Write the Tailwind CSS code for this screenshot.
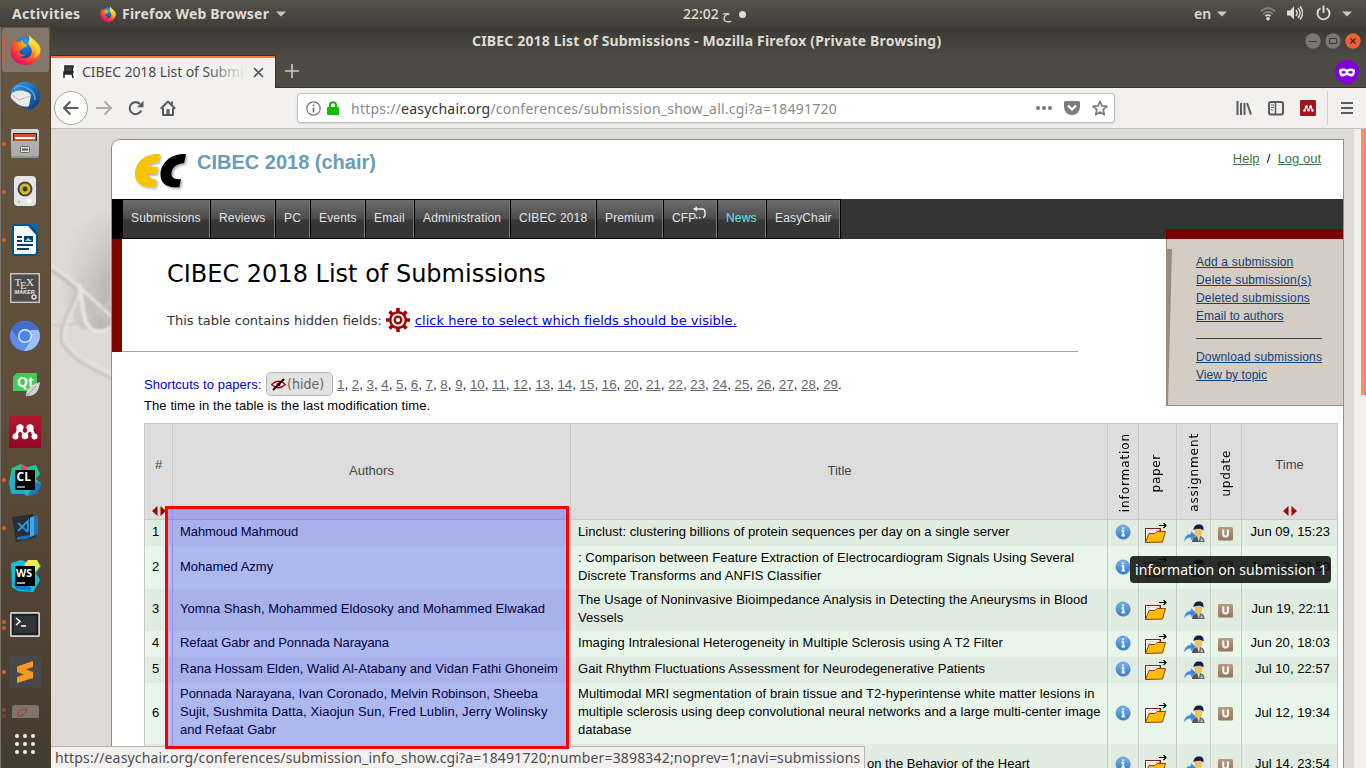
<!DOCTYPE html>
<html lang="en">
<head>
<meta charset="utf-8">
<title>CIBEC 2018 List of Submissions</title>
<script src="https://cdn.jsdelivr.net/npm/@tailwindcss/browser@4"></script>
</head>
<body class="relative w-[1366px] h-[768px] overflow-hidden bg-[#dedbd7] font-['Liberation_Sans',sans-serif] text-[13px] text-black">

<svg class="absolute w-0 h-0">
  <defs>
    <radialGradient id="fx" cx=".75" cy=".15" r=".95"><stop offset="0" stop-color="#fff04a"/><stop offset=".35" stop-color="#ffb61e"/><stop offset=".6" stop-color="#ff6a1a"/><stop offset=".85" stop-color="#f5204c"/><stop offset="1" stop-color="#d8106a"/></radialGradient>
    <radialGradient id="fxb" cx=".5" cy=".2" r=".8"><stop offset="0" stop-color="#19a5f5"/><stop offset="1" stop-color="#1b2f96"/></radialGradient>
    <linearGradient id="inf" x1="0" y1="0" x2="0" y2="1"><stop offset="0" stop-color="#7ab4ee"/><stop offset="1" stop-color="#2f7bd0"/></linearGradient>
    <linearGradient id="ub" x1="0" y1="0" x2="0" y2="1"><stop offset="0" stop-color="#b59b80"/><stop offset="1" stop-color="#94785c"/></linearGradient>
    <linearGradient id="silver" x1="0" y1="0" x2="0" y2="1"><stop offset="0" stop-color="#d8d8d8"/><stop offset="1" stop-color="#8f8f8f"/></linearGradient>
    <linearGradient id="tb" x1="0" y1="0" x2="1" y2="1"><stop offset="0" stop-color="#3ba0e6"/><stop offset="1" stop-color="#08357c"/></linearGradient>
  </defs>
  <symbol id="firefox" viewBox="0 0 32 32">
    <circle cx="16" cy="15" r="12" fill="url(#fxb)"/>
    <path d="M20 1c1 3 4 4 7 8 3 3 4.500 6 4.500 9a15.500 14 0 0 1-31 0C.5 12 2.500 8 4.500 4.500c0 2 .5 3 1.500 3.500 2-.5 4-.5 5 0l2-2c0 2 0 3.500 3 4.500l1.500 1c-1 2-3 2-4.500 3 0 2-3 2-3.500 4 .5 2.500 4 3.500 7 2.500-2 3-5 2.500-6.500 2.500 5 3 12.500 1 12.500-5.500 0-4-2-6-4-8 1.500-3 1.500-5 1.500-9z" fill="url(#fx)"/>
    <path d="M20 1c0 5 1 8 4.500 11 3 4 3 9-.5 13 4.500-1 7.500-5 7.500-9 0-8-8-9-11.500-15z" fill="#ffe03a" opacity=".7"/>
  </symbol>
  <symbol id="info" viewBox="0 0 16 16">
    <circle cx="8.600" cy="8.800" r="7" fill="#000" opacity=".25"/><circle cx="8" cy="8" r="7" fill="url(#inf)" stroke="#3b7fca" stroke-width=".6"/>
    <path d="M8 3.400v1.800M6.600 7H8.300v4.300M6.500 11.500h3.400" stroke="#fff" stroke-width="1.800" fill="none"/>
  </symbol>
  <symbol id="folder" viewBox="0 0 24 21">
    <path d="M1.500 19.500v-14h4l1.500 0h9v5" fill="#fff" stroke="#8a1a10"/>
    <path d="M1.500 5.500h15M16.500 5v4" stroke="#8a1a10" fill="none"/>
    <path d="M3.500 7.500h12M3.500 9.500h4" stroke="#b9b9b9" stroke-dasharray="1 1"/>
    <path d="M1.500 19.500l3.500-9h6l2-2h8.500l-3 10.500z" fill="#fabf05" stroke="#9a3a10"/>
    <path d="M15 2.500h7M19.500 0l2.500 2.500-2.500 2.500" stroke="#000" stroke-width="1.200" fill="none"/>
  </symbol>
  <symbol id="person" viewBox="0 0 21 18">
    <path d="M8 18c0-4 3-6 6.500-6s6 2 6 6z" fill="#4d5560"/><path d="M17 13l3 4-4 .5z" fill="#a9b0b8"/>
    <path d="M13 12h3l-1 6z" fill="#f0d9a0"/>
    <ellipse cx="14.500" cy="8" rx="3.800" ry="5" fill="#f0c35d"/>
    <path d="M9.500 6c0-4 3-6 6-5.500 3 0 4.500 2.500 4 6-2-2-6-2.500-10-.5z" fill="#161d52"/>
    <path d="M.5 17c0-4 2.500-7 6.500-7V7.500l5 4.200-5 4.300v-2.500c-3-.5-5 1-6.500 3.500z" fill="#3e86d8" stroke="#7aaee8" stroke-width=".5"/>
  </symbol>
  <symbol id="ubadge" viewBox="0 0 15 14">
    <rect width="15" height="13.500" rx="1.500" fill="url(#ub)"/>
    <path d="M5.300 3v4.200c0 3 4.600 3 4.600 0V3M4.300 3.500h2M8.900 3.500h2" stroke="#fff" stroke-width="2" fill="none"/>
  </symbol>
  <symbol id="sort" viewBox="0 0 14 10"><path d="M0 5L5.500 0v10zM14 5L8.500 0v10z" fill="#a50000"/></symbol>
  <symbol id="mendeley" viewBox="0 0 26 16">
    <path d="M3.500 12.500L7 4.500l6 5 6-5 3.500 8" stroke="#fff" stroke-width="3" fill="none"/>
    <g fill="#fff"><circle cx="8" cy="4" r="3.700"/><circle cx="18" cy="4" r="3.700"/><circle cx="3.500" cy="12.500" r="3"/><circle cx="13" cy="12" r="3.300"/><circle cx="22.500" cy="12.500" r="3"/></g>
    <circle cx="13" cy="6.500" r="2.200" fill="#a00d28"/>
  </symbol>
</svg>

<!-- desktop top bar -->
<header class="h-[27px] flex items-center bg-linear-to-b from-[#55524a] to-[#403f3a] text-[#dfdbd2] font-['Noto_Sans',sans-serif] font-bold text-[14px] whitespace-nowrap">
  <span class="w-[88px] pl-3 tracking-[0.35px]">Activities</span>
  <svg class="w-4 h-4 ml-3"><use href="#firefox"/></svg>
  <span class="ml-[6px] w-[150px] tracking-[0.2px]">Firefox Web Browser</span>
  <svg class="w-[10px] h-[6px] ml-[4px]" viewBox="0 0 10 6"><path d="M0 .5h10L5 5.500z" fill="#ccc8c0"/></svg>
  <span class="ml-[397px] w-[65px] font-medium tracking-[-0.3px]">22:02 ح <span class="inline-block size-[7px] rounded-full bg-[#dfdbd2] mb-[1px] ml-[4px]"></span></span>
  <span class="ml-[446px] w-[18px] font-semibold">en</span>
  <svg class="w-[10px] h-[6px] ml-[5px]" viewBox="0 0 10 6"><path d="M0 .5h10L5 5.500z" fill="#ccc8c0"/></svg>
  <svg class="w-4 h-[14px] ml-[33px]" viewBox="0 0 16 14" fill="none" stroke-width="1.800"><path d="M1 4.500c4-4.500 10-4.500 14 0" stroke="#85827b"/><path d="M3.300 7c3-3 6.500-3 9.400 0" stroke="#85827b"/><path d="M5.500 9.200c1.500-1.500 3.500-1.500 5 0" stroke="#dfdbd2"/><circle cx="8" cy="11.800" r="1.800" fill="#dfdbd2"/></svg>
  <svg class="w-4 h-4 ml-[11px] -mt-px" viewBox="0 0 16 16"><path d="M0 5.500h3l4-4v13l-4-4H0z" fill="#dfdbd2"/><path d="M9 5c1.500 2 1.500 4 0 6M11 3c2.500 3 2.500 7 0 10M13 1.500c3.300 4 3.300 9 0 13" stroke="#dfdbd2" stroke-width="1.400" fill="none"/></svg>
  <svg class="w-[15px] h-4 ml-[13px] -mt-px" viewBox="0 0 15 16" fill="none" stroke="#dfdbd2" stroke-width="1.900"><path d="M4.500 3.200a6 6 0 1 0 6 0M7.500 .5v7.500"/></svg>
  <svg class="w-[10px] h-[6px] ml-[11px]" viewBox="0 0 10 6"><path d="M0 .5h10L5 5.500z" fill="#ccc8c0"/></svg>
</header>

<div class="flex h-[741px]">
  <!-- dock -->
  <aside class="w-[51px] shrink-0 bg-linear-to-b from-[#66563f] via-[#5e4e3b] to-[#463b30] border-l border-[#77736b] border-r border-r-[#4c4030] flex flex-col overflow-hidden">
    <div class="h-[45px] shrink-0 flex items-center pl-px"><div class="w-[47px] h-[44px] rounded-[3px] bg-[#83766a] flex items-center">
      <div class="flex flex-col gap-[2px] w-[3px]"><i class="size-1 rounded-full bg-[#e2582d]"></i><i class="size-1 rounded-full bg-[#e2582d]"></i><i class="size-1 rounded-full bg-[#e2582d]"></i><i class="size-1 rounded-full bg-[#e2582d]"></i></div>
      <svg class="size-[31px] ml-[5px] -mt-px"><use href="#firefox"/></svg></div></div>
    <div class="h-12 shrink-0 flex items-center pl-[8px]"><svg class="size-8" viewBox="0 0 32 32"><path d="M2 12C5 1 19-1 26 5c6 5 6 14 3 19-3 5-9 7-13 5L3 19z" fill="url(#tb)"/><path d="M2 15c2-6 16-6 20 0l-2 11c-5 2-11-1-15-5-2-2-4-3-3-6z" fill="#eceae6"/><path d="M3 15l7 5 11-4" stroke="#b6b3ae" fill="none"/><path d="M5 9c3-5 10-3 13-1 5 2 8 6 8 12" stroke="#4ba7e8" stroke-width="1.500" fill="none"/></svg></div>
    <div class="h-12 shrink-0 flex items-center pl-px"><i class="size-1 rounded-full bg-[#f05a28]"></i><svg class="w-[30px] h-8 ml-[4px]" viewBox="0 0 30 32"><rect x="1" y="1" width="28" height="29" rx="2" fill="url(#silver)"/><rect x="3" y="5" width="24" height="9" fill="#33302c"/><path d="M4 6h22v8H4z" fill="#c75320"/><path d="M5 9h20v2H5z" fill="#fff"/><path d="M2 13h26v15H2z" fill="#aeaeae"/><rect x="10.500" y="18.500" width="9" height="6" rx="1" fill="#ddd" stroke="#666"/><path d="M12 21.500h6" stroke="#555" stroke-width="2"/></svg></div>
    <div class="h-12 shrink-0 flex items-center pl-px"><i class="size-1 rounded-full bg-[#f05a28]"></i><svg class="w-[30px] h-8 ml-[4px] -mt-[2px]" viewBox="0 0 30 32"><path d="M3 8c-3 5-3 11 0 16M27 8c3 5 3 11 0 16" stroke="#45597a" fill="none" stroke-width="1.500"/><rect x="4" y="1" width="22" height="30" rx="4" fill="#e4e4e2"/><circle cx="15" cy="14" r="7.500" fill="#444"/><circle cx="15" cy="14" r="5.500" fill="#d8ba28"/><circle cx="15" cy="14" r="2.500" fill="#3a3a3a"/><circle cx="19" cy="26" r="2.500" fill="#fff"/><circle cx="9" cy="27" r="1" fill="#aaa"/></svg></div>
    <div class="h-12 shrink-0 flex items-center pl-px"><i class="size-1 rounded-full bg-[#f05a28]"></i><svg class="w-[26px] h-8 ml-[6px]" viewBox="0 0 26 32"><path d="M3 0h15l8 8v21q0 3-3 3H3q-3 0-3-3V3q0-3 3-3z" fill="#02568f"/><path d="M2 2h14l8 9v17q0 2-2 2H2z" fill="#f5f7f8"/><path d="M18 0h8v8z" fill="#0a6da8"/><path d="M5 13h5M5 17h5M5 21h16M5 25h12" stroke="#02426e" stroke-width="2"/><rect x="12" y="12" width="9" height="6" fill="#02426e"/><path d="M13 17l3-3 4 3z" fill="#9fd0f0"/></svg></div>
    <div class="h-12 shrink-0 flex items-center pl-[9px]"><svg class="w-[30px] h-[30px]" viewBox="0 0 30 30"><rect x=".7" y=".7" width="28.600" height="28.600" fill="#4c4c4c" stroke="#c9c6c0" stroke-width="1.500"/><g fill="#e8e8e8" font-family="Liberation Serif"><text x="4.500" y="13" font-size="11">T</text><text x="10" y="16" font-size="11">E</text><text x="16" y="13" font-size="11">X</text><text x="4.500" y="21" font-size="5.500" font-weight="bold" font-family="Liberation Sans" font-style="italic">MAKER</text></g><circle cx="24" cy="24" r="2" stroke="#ddd" stroke-width="1.500" fill="none"/></svg></div>
    <div class="h-12 shrink-0 flex items-center pl-[9px]"><svg class="size-[30px]" viewBox="0 0 30 30"><circle cx="15" cy="15" r="15" fill="#5a8ff0"/><path d="M1.500 8.500A15 15 0 0 1 28.500 9H15l-6.500 9z" fill="#3f6fce"/><path d="M28.500 9A15 15 0 0 1 14 30l7-11V9z" fill="#9fbffa"/><circle cx="15" cy="15" r="7" fill="#e6efff"/><circle cx="15" cy="15" r="5.600" fill="#4a86ee"/></svg></div>
    <div class="h-12 shrink-0 flex items-center pl-[12px]"><svg class="w-[28px] h-6 mt-[2px]" viewBox="0 0 28 24"><path d="M4 0h20v14l-4 4H0V4z" fill="#41cd52"/><text x="4" y="14" font-size="14" font-weight="bold" font-family="Noto Sans" fill="#fff">Qt</text><path d="M27 9c-8 3-14 6-14 14 9 1 13-5 14-14z" fill="#d5d5d5"/><path d="M13 24l10-11" stroke="#888" stroke-width=".8"/></svg></div>
    <div class="h-12 shrink-0 flex items-center pl-[8px]"><div class="size-8 bg-linear-to-b from-[#b5172f] to-[#910622] flex items-center justify-center"><svg class="w-[26px] h-4"><use href="#mendeley"/></svg></div></div>
    <div class="h-12 shrink-0 flex items-center pl-px"><i class="size-1 rounded-full bg-[#f05a28]"></i><svg class="size-8 ml-[3px]" viewBox="0 0 32 32"><path d="M3 4l9-4 6 3 9-2 4 9-4 5 5 5-4 9-10 3-7-5-9 2-2-10z" fill="#23c792"/><path d="M12 0l6 3v5h-6z" fill="#d84791"/><path d="M0 18l6-12v20l9 0 3 3 4 3-8-2-11 0z" fill="#1bb0d0"/><path d="M27 18l5 2-4 9-10 3z" fill="#1279d0"/><rect x="6" y="6" width="20" height="20" fill="#000"/><text x="7.500" y="17" font-family="Open Sans" font-size="12" font-weight="bold" fill="#fff">CL</text><path d="M8 23h8" stroke="#bbb" stroke-width="1.500"/></svg></div>
    <div class="h-12 shrink-0 flex items-center pl-px"><i class="size-1 rounded-full bg-[#f05a28]"></i><svg class="w-[28px] h-[30px] ml-[6px]" viewBox="0 0 28 30"><path d="M0 4l21-3 3 23-20 5z" fill="#2b2d35"/><path d="M18 5l8-3v19l-12 5-9 1v-3l13-2z" fill="#1876c0"/><path d="M18 5l4-2v19l-4 2z" fill="#4da4df"/><path d="M6 10l10 9M6 18l10-10v10" stroke="#2a91d8" stroke-width="2" fill="none"/></svg></div>
    <div class="h-12 shrink-0 flex items-center pl-[8px]"><svg class="size-8" viewBox="0 0 32 32"><path d="M2 3l10-3 6 2 9-2 5 6-5 7 4 7-4 7-3 5-15-1-6-4z" fill="#07c3d9"/><path d="M15 5l4-5h9l3 6-4 5z" fill="#f2ef50"/><path d="M4 22l3 7 15 2v-4z" fill="#1f76d2"/><rect x="6" y="6" width="20" height="20" fill="#000"/><text x="7" y="17" font-family="Open Sans" font-size="10.500" font-weight="bold" fill="#fff">WS</text><path d="M8 23h8" stroke="#ddd" stroke-width="1.500"/></svg></div>
    <div class="h-12 shrink-0 flex items-center pl-px pt-[2px]"><div class="flex flex-col gap-[2px]"><i class="size-1 rounded-full bg-[#e2582d]"></i><i class="size-1 rounded-full bg-[#e2582d]"></i></div><svg class="w-[30px] h-[26px] ml-1" viewBox="0 0 30 26"><rect x=".8" y=".8" width="28.400" height="23.400" rx="1" fill="#2b2d2c" stroke="#d4d4d4" stroke-width="1.700"/><rect x="3" y="3" width="24" height="19" fill="#323436" stroke="#111"/><path d="M6 6l4 3.500-4 3.500M11 14h5" stroke="#fff" stroke-width="1.600" fill="none"/></svg></div>
    <div class="h-12 shrink-0 flex items-center pl-px"><i class="size-1 rounded-full bg-[#f05a28]"></i><div class="size-8 ml-[3px] rounded-[2px] bg-[#484848] flex items-center justify-center"><svg class="w-4 h-[22px]" viewBox="0 0 16 22"><path d="M0 5.500L16 0v6l-7 2.500 7 2.500v6L0 22v-6l7-2.500L0 11z" fill="#f89820"/></svg></div></div>
    <div class="h-6 shrink-0 flex items-start pt-2 pl-px opacity-80"><div class="flex flex-col gap-[2px] mt-1"><i class="size-1 rounded-full bg-[#b5482a]"></i><i class="size-1 rounded-full bg-[#8a4028]"></i></div><svg class="w-[27px] h-[14px] ml-[6px]" viewBox="0 0 27 14"><path d="M0 14V4q0-3 3-3h21q3 0 3 3v10z" fill="#8b8279"/><path d="M7 13c-3-5 2-9 8-8-2 4-4 7-8 8" stroke="#b0403a" fill="none"/></svg></div>
    <div class="h-12 shrink-0 flex items-center pl-[14px]"><svg class="size-5" viewBox="0 0 20 20" fill="#f1f0ee"><circle cx="2" cy="2" r="2"/><circle cx="10" cy="2" r="2"/><circle cx="18" cy="2" r="2"/><circle cx="2" cy="10" r="2"/><circle cx="10" cy="10" r="2"/><circle cx="18" cy="10" r="2"/><circle cx="2" cy="18" r="2"/><circle cx="10" cy="18" r="2"/><circle cx="18" cy="18" r="2"/></svg></div>
  </aside>

  <!-- browser window -->
  <main class="relative flex-1 flex flex-col overflow-hidden">
    <div class="h-[28px] shrink-0 flex items-center bg-linear-to-b from-[#3a3935] to-[#4b4942] font-['Noto_Sans',sans-serif] font-bold text-[14px] text-[#dfdbd2] whitespace-nowrap">
      <span class="ml-[421px] w-[480px] tracking-[0.17px] -mt-px">CIBEC 2018 List of Submissions - Mozilla Firefox (Private Browsing)</span>
      <div class="ml-[353px] flex gap-1">
        <svg class="size-4" viewBox="0 0 16 16"><circle cx="8" cy="8" r="7.700" fill="#7a7871"/><path d="M4 8.500h8" stroke="#3a3935"/></svg>
        <svg class="size-4" viewBox="0 0 16 16"><circle cx="8" cy="8" r="7.700" fill="#7a7871"/><path d="M4.500 5.500h7v5h-7z" fill="none" stroke="#3a3935"/></svg>
        <svg class="size-4" viewBox="0 0 16 16"><circle cx="8" cy="8" r="7.700" fill="#ec6339"/><path d="M5.500 5.500l5 5M10.500 5.500l-5 5" stroke="#3a2018" stroke-width="1.200"/></svg>
      </div>
    </div>
    <div class="h-[33px] shrink-0 flex bg-[#4e4b44] border-b border-[#35332f]">
      <div class="w-[225px] h-[33px] bg-[#f2f1f0] border-t border-r border-[#35332f] shadow-[inset_0_2px_0_#f07746] flex items-center font-['Noto_Sans',sans-serif] text-[14px] text-[#4c4c4c] whitespace-nowrap">
        <svg class="size-4 ml-[9px]" viewBox="0 0 16 16"><rect width="16" height="16" rx="2" fill="#fff"/><path d="M5 2h8l-1 6H5zM4 8h9l-1 2H4zM4 9v5M12 9l1 5" stroke="#222" stroke-width="1.500" fill="#444"/></svg>
        <div class="relative w-[164px] ml-[6px] mr-[2px] -mt-px overflow-hidden tracking-[-0.08px]">CIBEC 2018 List of Submissions<div class="absolute right-0 top-0 h-full w-10 bg-linear-to-r from-transparent to-[#f2f1f0]"></div></div>
        <svg class="size-[11px] ml-[5px]" viewBox="0 0 11 11"><path d="M1 1l9 9M10 1l-9 9" stroke="#555" stroke-width="1.700"/></svg>
      </div>
      <svg class="size-[14px] ml-[9px] mt-[9px]" viewBox="0 0 14 14"><path d="M7 0v14M0 7h14" stroke="#c9c6c0" stroke-width="1.700"/></svg>
      <svg class="size-6 ml-auto mr-[7px] mt-[5px]" viewBox="0 0 24 24"><circle cx="12" cy="12" r="12" fill="#8000d7"/><path d="M4 10c2-2 5-2 8-.5 3-1.500 6-1.500 8 .5 0 5-2 7-4 6.500-2 0-3-1.500-4-1.500s-2 1.500-4 1.500C6 17 4 15 4 10z" fill="#fff"/><ellipse cx="8.500" cy="12.300" rx="2.200" ry="1.400" fill="#8000d7"/><ellipse cx="15.500" cy="12.300" rx="2.200" ry="1.400" fill="#8000d7"/></svg>
    </div>
    <div class="h-[41px] shrink-0 flex items-center bg-[#f2f1f0] border-b border-[#c4c1bd] text-[#5b5b5b]">
      <div class="size-[34px] ml-[3px] rounded-full bg-[#fbfbfa] border border-[#a5a3a0] flex items-center justify-center"><svg class="size-4" viewBox="0 0 16 16"><path d="M15.500 8H1.500M7.500 1.500L1 8l6.500 6.500" stroke="currentColor" stroke-width="2" fill="none"/></svg></div>
      <svg class="size-4 ml-[8px] text-[#b0afad]" viewBox="0 0 16 16"><path d="M0 8h14.500M8.500 1.500L15 8l-6.500 6.500" stroke="currentColor" stroke-width="2" fill="none"/></svg>
      <svg class="size-4 ml-[16px]" viewBox="0 0 16 16"><path d="M13.200 10.500A6 6 0 1 1 12 4" stroke="currentColor" stroke-width="2.100" fill="none"/><path d="M15.500 .8v6.500H9z" fill="currentColor"/></svg>
      <svg class="size-4 ml-[16px]" viewBox="0 0 16 16"><path d="M.8 8.800L8 1.500l7.200 7.300M3 8v7h10V8" stroke="currentColor" stroke-width="2" fill="none" stroke-linejoin="round"/><path d="M11 1.500h2v4l-2-2zM6.500 9h3v6h-3z" fill="currentColor"/></svg>
      <div class="ml-[121px] w-[818px] h-[30px] rounded-[4px] border border-[#c5c3c0] bg-white shadow-sm flex items-center text-[#7e7e7e]">
        <svg class="size-[15px] ml-[8px]" viewBox="0 0 15 15"><circle cx="7.500" cy="7.500" r="6.700" stroke="#777" stroke-width="1.200" fill="none"/><path d="M7.500 3.500v1.700M7.500 6.500v5" stroke="#777" stroke-width="1.700"/></svg>
        <svg class="w-3 h-[14px] ml-[6px]" viewBox="0 0 12 14"><path d="M3 7V4.200a3 3 0 0 1 6 0V7" stroke="#12bc00" stroke-width="2" fill="none"/><rect y="6" width="12" height="8" rx="1" fill="#12bc00"/></svg>
        <span class="ml-[12px] w-[685px] font-['Noto_Sans',sans-serif] text-[14px] tracking-[0.225px] whitespace-nowrap text-[#8a8a8a]">https://<span class="text-[#333]">easychair.org</span>/conferences/submission_show_all.cgi?a=18491720</span>
        <svg class="w-4 h-1" viewBox="0 0 16 4" fill="#757575"><circle cx="2" cy="2" r="2"/><circle cx="8" cy="2" r="2"/><circle cx="14" cy="2" r="2"/></svg>
        <svg class="size-4 ml-3" viewBox="0 0 16 16"><path d="M2 1h12q2 0 2 2v4a8 8 0 0 1-16 0V3q0-2 2-2z" fill="#7c7c7c"/><path d="M4 5.500l4 4 4-4" stroke="#fff" stroke-width="2.200" fill="none"/></svg>
        <svg class="size-4 ml-3" viewBox="0 0 16 16"><path d="M8 1.300l2 4.600 5 .5-3.800 3.300 1.200 5L8 12l-4.400 2.700 1.200-5L1 6.400l5-.5z" stroke="#7c7c7c" stroke-width="1.700" fill="none" stroke-linejoin="round"/></svg>
      </div>
      <svg class="size-4 ml-[121px]" viewBox="0 0 16 16"><path d="M1.500 1v14M5 3v12M8.500 3v12M11 3l4 11.500" stroke="currentColor" stroke-width="2" fill="none"/></svg>
      <svg class="size-4 ml-[16px]" viewBox="0 0 16 16"><rect x="1" y="2" width="14" height="12.500" rx="2" stroke="currentColor" stroke-width="2" fill="none"/><path d="M7.500 2v12" stroke="currentColor" stroke-width="1.500"/><path d="M3 5h3M3 7.500h3M3 10h2" stroke="currentColor"/></svg>
      <div class="size-4 ml-[16px] bg-[#9d1620] rounded-[1px] flex items-center justify-center"><svg class="w-[11px] h-[7px]"><use href="#mendeley"/></svg></div>
      <div class="w-px h-[34px] bg-[#d3d1ce] ml-[11px]"></div>
      <svg class="w-3 h-3 ml-[13px]" viewBox="0 0 12 12"><path d="M0 1h12M0 6h12M0 11h12" stroke="currentColor" stroke-width="2"/></svg>
    </div>

    <!-- page viewport -->
    <div class="flex flex-1 overflow-hidden">
      <div class="relative w-[60px] shrink-0">
        <svg class="absolute left-0 top-[50px] w-[60px] h-[210px]" viewBox="0 0 60 210">
          <defs><filter id="soft"><feGaussianBlur stdDeviation="1.200"/></filter><linearGradient id="shade" x1="0" y1="0" x2="1" y2=".3"><stop offset=".3" stop-color="#b9b8b4" stop-opacity="0"/><stop offset="1" stop-color="#b3b2ae"/></linearGradient><linearGradient id="fade" x1="0" y1="0" x2="0" y2="1"><stop offset="0" stop-color="#dedbd7"/><stop offset="1" stop-color="#dedbd7" stop-opacity="0"/></linearGradient></defs>
          <path d="M60 30v122L30 150 0 110V60z" fill="url(#shade)" filter="url(#soft)" opacity=".8"/>
          <rect y="20" width="60" height="80" fill="url(#fade)"/>
          <g fill="none" filter="url(#soft)"><path d="M0 91c18 10 35 30 60 52" stroke="#c4c2bf" stroke-width="4"/><path d="M0 87c18 10 38 30 60 50" stroke="#e6e4e1" stroke-width="3"/><path d="M60 122c-20 18-34 26-60 24" stroke="#cbc9c5" stroke-width="2"/><path d="M28 105c5 25 3 40 14 46 8 4 14 0 18-3" stroke="#e9e7e4" stroke-width="4"/><path d="M26 110C20 130 8 145 10 162c10 20 30 26 50 38" stroke="#c6c4c0" stroke-width="2.500"/><path d="M30 110C24 132 12 146 14 160c10 18 28 24 46 34" stroke="#e6e4e1" stroke-width="2"/></g>
        </svg>
      </div>
      <div class="relative w-[1233px] shrink-0 mt-[10px] bg-white rounded-tl-[9px] border border-b-0 border-[#8f8f8f]">
        <!-- page header -->
        <div class="h-[59px] flex items-start">
          <svg class="w-[56px] h-[40px] ml-[21px] mt-[12px]" viewBox="0 0 56 40">
            <defs><filter id="drop" x="-.2" y="-.2" width="1.400" height="1.400"><feDropShadow dx="1.500" dy="1.500" stdDeviation="1" flood-color="#000" flood-opacity=".35"/></filter></defs>
            <g filter="url(#drop)">
            <path d="M27 2C12 1 2 10 2 22c0 9 6 13.500 20 13.300L23.500 27.300c-5 0-8-1.500-9-5.300h8.800l1.400-7.200H15c2-3 5-4.500 10.300-4.800z" fill="#f8c300"/>
            <path d="M53 2C38 1 27.500 11 27.500 22.500c0 9 6 13.500 18.800 12.800L48 27c-7 1-10-2-9.500-6 .5-5.500 5-9.200 12.500-9.700z" fill="#000"/></g>
          </svg>
          <span class="ml-[8px] mt-[10px] text-[20px] leading-6 font-bold text-[#6a9db5]">CIBEC 2018 (chair)</span>
          <div class="ml-auto mr-[22px] mt-[11px] leading-4 whitespace-pre"><a class="underline text-[#3c7548]">Help</a>  /  <a class="underline text-[#3c7548]">Log out</a></div>
        </div>
        <!-- menu -->
        <nav class="h-10 bg-[#333] flex text-[12px] text-[#e3e3e3] leading-[37px] tracking-[0.15px]">
          <div class="flex bg-black pl-[11px] py-px *:h-[38px] *:pl-2 *:border-r *:border-black *:bg-[linear-gradient(#6e6e6e,#4a4a4a_50%,#383838_52%,#333)] *:shadow-[inset_-1px_0_0_#777]">
            <a class="w-[88px]">Submissions</a><a class="w-[65px]">Reviews</a><a class="w-[35px]">PC</a><a class="w-[55px]">Events</a><a class="w-[49px]">Email</a><a class="w-[96px]">Administration</a><a class="w-[86px]">CIBEC 2018</a><a class="w-[67px]">Premium</a><a class="w-[54px] flex">CFP<svg class="w-[13px] h-[14px] mt-[6px] -ml-[3px]" viewBox="0 0 13 14"><path d="M3 3h6q3 0 3 3v3q0 2-2 2.500" stroke="#f2f2f2" stroke-width="1.400" fill="none"/><path d="M0 3l4-2.500v5zM3 11h1.500v1.500H3zM6 11h1.500v1.500H6z" fill="#f2f2f2"/></svg></a><a class="w-[49px] text-[#5ee8e8]">News</a><a class="w-[74px]">EasyChair</a>
          </div>
        </nav>
        <!-- title block -->
        <section class="h-[113px] flex">
          <div class="w-[10px] bg-[#800000]"></div>
          <div class="w-[956px] border-b border-[#a5a5a5] pl-[45px] font-['DejaVu_Sans',sans-serif] whitespace-nowrap">
            <h1 class="text-[24px] leading-[28px] mt-[21px]">CIBEC 2018 List of Submissions</h1>
            <div class="flex items-center mt-[20px] text-[13px] text-[#333]"><span class="mt-[2px]">This table contains hidden fields:</span>
              <svg class="size-6 ml-[4px] mr-[5px]" viewBox="0 0 24 24" fill="none" stroke="#a50000"><circle cx="12" cy="12" r="7.800" stroke-width="2.500"/><circle cx="12" cy="12" r="3.300" stroke-width="2.300"/><path d="M12 0v4M12 20v4M0 12h4M20 12h4M3.500 3.500l3 3M17.500 17.500l3 3M3.500 20.500l3-3M17.500 6.500l3-3" stroke-width="3.600"/></svg>
              <a class="underline text-[#0000e0] mt-[2px] tracking-[0.02px]">click here to select which fields should be visible.</a></div>
          </div>
        </section>
        <!-- shortcuts -->
        <div class="pl-8 pt-[20px] text-[13.280px] whitespace-nowrap">
          <div class="h-6 flex items-center text-[#0000cc]"><span class="w-[122px] text-[13px] leading-6 mt-[2px] tracking-[0.05px]">Shortcuts to papers:</span>
            <div class="w-[67px] h-6 rounded-[5px] border border-[#b5b5b5] bg-[#e3e3e3] flex items-center font-['DejaVu_Sans_Condensed','DejaVu_Sans',sans-serif] text-[14px] text-[#666]"><svg class="w-[15px] h-[13px] ml-1 mr-px" viewBox="0 0 15 13"><path d="M.7 6.500Q7.500 0 14.300 6.500 7.500 13 .7 6.500z" fill="#fff" stroke="#a50000" stroke-width="1.300"/><circle cx="7.500" cy="6.500" r="2" fill="#a50000"/><path d="M2 12L13 1" stroke="#000" stroke-width="1.800"/></svg><span class="font-stretch-condensed">(hide)</span></div>
            <div class="ml-[4px] mt-[2px] [&_u]:text-[#666]"><u>1</u>, <u>2</u>, <u>3</u>, <u>4</u>, <u>5</u>, <u>6</u>, <u>7</u>, <u>8</u>, <u>9</u>, <u>10</u>, <u>11</u>, <u>12</u>, <u>13</u>, <u>14</u>, <u>15</u>, <u>16</u>, <u>20</u>, <u>21</u>, <u>22</u>, <u>23</u>, <u>24</u>, <u>25</u>, <u>26</u>, <u>27</u>, <u>28</u>, <u>29</u>.</div>
          </div>
          <div class="h-[18px] leading-[20px] text-[13px] tracking-[0.1px]">The time in the table is the last modification time.</div>
        </div>
        <!-- submissions table -->
        <div class="ml-8 mt-[9px] w-[1194px] border border-[#c8c8c8] border-b-0 leading-[18px] *:grid *:grid-cols-[27px_398px_537px_31px_38px_34px_31px_96px]">
          <div class="h-[96px] bg-[#ddd] border-b border-[#c8c8c8] text-[#444] *:border-[#c8c8c8] [&>*+*]:border-l">
            <div class="flex flex-col items-center justify-between pt-[32px] pb-[3px]"><span>#</span><svg class="w-[14px] h-[10px]"><use href="#sort"/></svg></div>
            <div class="flex items-center justify-center pb-[2px]">Authors</div>
            <div class="flex items-center justify-center pb-[2px] pl-px">Title</div>
            <div class="flex items-center justify-center text-black font-['DejaVu_Sans',sans-serif] text-[12px]"><span class="[writing-mode:vertical-rl] rotate-180 tracking-[0.9px] mt-[2px] ml-[3px]">information</span></div>
            <div class="flex items-center justify-center text-black font-['DejaVu_Sans',sans-serif] text-[12px]"><span class="[writing-mode:vertical-rl] rotate-180 tracking-[0.7px] mt-[3px] mr-[3px]">paper</span></div>
            <div class="flex items-center justify-center text-black font-['DejaVu_Sans',sans-serif] text-[12px]"><span class="[writing-mode:vertical-rl] rotate-180 tracking-[0.9px] mt-[2px]">assignment</span></div>
            <div class="flex items-center justify-center text-black font-['DejaVu_Sans',sans-serif] text-[12px]"><span class="[writing-mode:vertical-rl] rotate-180 tracking-[0.7px] mt-[3px]">update</span></div>
            <div class="flex flex-col items-center justify-between pt-[32px] pb-[3px]"><span>Time</span><svg class="w-[14px] h-[10px]"><use href="#sort"/></svg></div>
          </div>
          <div class="h-[26px] bg-[#e1ece1] *:border-[#c8c8c8] [&>*+*]:border-l *:flex *:items-center *:pl-[7px] *:pb-[2px]">
            <div>1</div><div class="tracking-[-0.07px]">Mahmoud Mahmoud</div><div class="tracking-[0.05px]">Linclust: clustering billions of protein sequences per day on a single server</div><div><svg class="size-4"><use href="#info"/></svg></div><div><svg class="w-6 h-[21px] -ml-[2px] mt-[2px]"><use href="#folder"/></svg></div><div><svg class="w-[21px] h-[18px] mt-[2px]"><use href="#person"/></svg></div><div><svg class="w-[15px] h-[14px] mt-[3px]"><use href="#ubadge"/></svg></div><div class="justify-end pr-[7px] tracking-[0.05px]">Jun 09, 15:23</div>
          </div>
          <div class="h-[43px] bg-[#e7f6e8] *:border-[#c8c8c8] [&>*+*]:border-l *:flex *:items-center *:pl-[7px] *:pb-[2px]">
            <div>2</div><div>Mohamed Azmy</div><div><p><span class="tracking-[0.025px]">: Comparison between Feature Extraction of Electrocardiogram Signals Using Several</span><br><span class="tracking-[0.09px]">Discrete Transforms and ANFIS Classifier</span></p></div><div><svg class="size-4"><use href="#info"/></svg></div><div><svg class="w-6 h-[21px] -ml-[2px] mt-[2px]"><use href="#folder"/></svg></div><div><svg class="w-[21px] h-[18px] mt-[2px]"><use href="#person"/></svg></div><div><svg class="w-[15px] h-[14px] mt-[3px]"><use href="#ubadge"/></svg></div><div class="justify-end pr-[7px] tracking-[0.05px]">Jun 13, 09:50</div>
          </div>
          <div class="h-[42px] bg-[#e1ece1] *:border-[#c8c8c8] [&>*+*]:border-l *:flex *:items-center *:pl-[7px] *:pb-[2px]">
            <div>3</div><div class="tracking-[0.04px]">Yomna Shash, Mohammed Eldosoky and Mohammed Elwakad</div><div class="tracking-[0.09px]">The Usage of Noninvasive Bioimpedance Analysis in Detecting the Aneurysms in Blood<br>Vessels</div><div><svg class="size-4"><use href="#info"/></svg></div><div><svg class="w-6 h-[21px] -ml-[2px] mt-[2px]"><use href="#folder"/></svg></div><div><svg class="w-[21px] h-[18px] mt-[2px]"><use href="#person"/></svg></div><div><svg class="w-[15px] h-[14px] mt-[3px]"><use href="#ubadge"/></svg></div><div class="justify-end pr-[7px] tracking-[0.05px]">Jun 19, 22:11</div>
          </div>
          <div class="h-[26px] bg-[#e7f6e8] *:border-[#c8c8c8] [&>*+*]:border-l *:flex *:items-center *:pl-[7px] *:pb-[2px]">
            <div>4</div><div class="tracking-[-0.09px]">Refaat Gabr and Ponnada Narayana</div><div class="tracking-[0.07px]">Imaging Intralesional Heterogeneity in Multiple Sclerosis using A T2 Filter</div><div><svg class="size-4"><use href="#info"/></svg></div><div><svg class="w-6 h-[21px] -ml-[2px] mt-[2px]"><use href="#folder"/></svg></div><div><svg class="w-[21px] h-[18px] mt-[2px]"><use href="#person"/></svg></div><div><svg class="w-[15px] h-[14px] mt-[3px]"><use href="#ubadge"/></svg></div><div class="justify-end pr-[7px] tracking-[0.05px]">Jun 20, 18:03</div>
          </div>
          <div class="h-[26px] bg-[#e1ece1] *:border-[#c8c8c8] [&>*+*]:border-l *:flex *:items-center *:pl-[7px] *:pb-[2px]">
            <div>5</div><div class="tracking-[0.035px]">Rana Hossam Elden, Walid Al-Atabany and Vidan Fathi Ghoneim</div><div class="tracking-[0.06px]">Gait Rhythm Fluctuations Assessment for Neurodegenerative Patients</div><div><svg class="size-4"><use href="#info"/></svg></div><div><svg class="w-6 h-[21px] -ml-[2px] mt-[2px]"><use href="#folder"/></svg></div><div><svg class="w-[21px] h-[18px] mt-[2px]"><use href="#person"/></svg></div><div><svg class="w-[15px] h-[14px] mt-[3px]"><use href="#ubadge"/></svg></div><div class="justify-end pr-[7px] tracking-[0.05px]">Jul 10, 22:57</div>
          </div>
          <div class="h-[61px] bg-[#e7f6e8] *:border-[#c8c8c8] [&>*+*]:border-l *:flex *:items-center *:pl-[7px] *:pb-[2px]">
            <div>6</div><div><p class="-mt-px"><span class="tracking-[-0.035px]">Ponnada Narayana, Ivan Coronado, Melvin Robinson, Sheeba</span><br><span class="tracking-[0.08px]">Sujit, Sushmita Datta, Xiaojun Sun, Fred Lublin, Jerry Wolinsky</span><br>and Refaat Gabr</p></div><div><p class="-mt-px"><span class="tracking-[0.06px]">Multimodal MRI segmentation of brain tissue and T2-hyperintense white matter lesions in</span><br><span class="tracking-[0.025px]">multiple sclerosis using deep convolutional neural networks and a large multi-center image</span><br>database</p></div><div><svg class="size-4"><use href="#info"/></svg></div><div><svg class="w-6 h-[21px] -ml-[2px] mt-[2px]"><use href="#folder"/></svg></div><div><svg class="w-[21px] h-[18px] mt-[2px]"><use href="#person"/></svg></div><div><svg class="w-[15px] h-[14px] mt-[3px]"><use href="#ubadge"/></svg></div><div class="justify-end pr-[7px] pt-px tracking-[0.05px]">Jul 12, 19:34</div>
          </div>
          <div class="h-[42px] bg-[#e1ece1] *:border-[#c8c8c8] [&>*+*]:border-l *:flex *:items-center *:pl-[7px] *:pb-[2px]">
            <div></div><div></div><div><span class="ml-[289px]">on the Behavior of the Heart</span></div><div><svg class="size-4"><use href="#info"/></svg></div><div><svg class="w-6 h-[21px] -ml-[2px] mt-[2px]"><use href="#folder"/></svg></div><div><svg class="w-[21px] h-[18px] mt-[2px]"><use href="#person"/></svg></div><div><svg class="w-[15px] h-[14px] mt-[3px]"><use href="#ubadge"/></svg></div><div class="justify-end pr-[7px] tracking-[0.05px]">Jul 14, 23:54</div>
          </div>
        </div>
        <!-- side menu overlapping the nav bar -->
        <div class="absolute right-0 top-[89px] w-[177px] h-[177px] flex flex-col text-[12px] leading-[18px] text-[#13427a] tracking-[0.17px] whitespace-nowrap">
          <div class="h-[10px] bg-[#7a0000]"></div>
          <div class="relative flex-1 border-l border-b border-[#9c8d7b] bg-[#d4cdc3] pl-[29px] pt-[14px]">
            <svg class="absolute left-0 top-[10px] w-[6px] h-[156px]" viewBox="0 0 6 156"><path d="M0 0h5L1 156H0z" fill="#978e83"/></svg>
            <div class="flex flex-col items-start *:underline"><a>Add a submission</a><a>Delete submission(s)</a><a>Deleted submissions</a><a class="tracking-[0.05px]">Email to authors</a></div>
            <div class="w-[126px] h-px bg-[#444] mt-[13px] mb-[9px]"></div>
            <div class="flex flex-col items-start *:underline"><a>Download submissions</a><a class="tracking-[0.05px]">View by topic</a></div>
          </div>
        </div>
      </div>
      <div class="ml-auto w-[12px] bg-[#f0efee] flex justify-end"><div class="w-[5px] h-[266px] bg-[#f28e6a]"></div></div>
    </div>
  </main>
</div>

<!-- highlight, tooltip and link status over the page -->
<div class="absolute left-[165px] top-[506px] w-[404px] h-[243px] border-[3px] border-[#f00] bg-[#0000ff]/25 bg-clip-padding"></div>
<div class="absolute left-[1130px] top-[556px] w-[201px] h-[27px] rounded-[4px] bg-[#080a09]/85 text-white font-['Noto_Sans',sans-serif] text-[14px] leading-[27px] pl-[5px] whitespace-nowrap tracking-[0.12px]">information on submission 1</div>
<div class="absolute left-[51px] top-[746px] w-[814px] h-[22px] border-t border-r border-[#b9b6b2] bg-[#f2f1f0] text-[#4c4c4c] font-['Noto_Sans',sans-serif] text-[14px] leading-[22px] pl-1 whitespace-nowrap tracking-[0.165px]">https://easychair.org/conferences/submission_info_show.cgi?a=18491720;number=3898342;noprev=1;navi=submissions</div>
<div class="absolute left-[165px] top-[746px] w-[404px] h-[3px] bg-[#f00]"></div>
</body>
</html>
